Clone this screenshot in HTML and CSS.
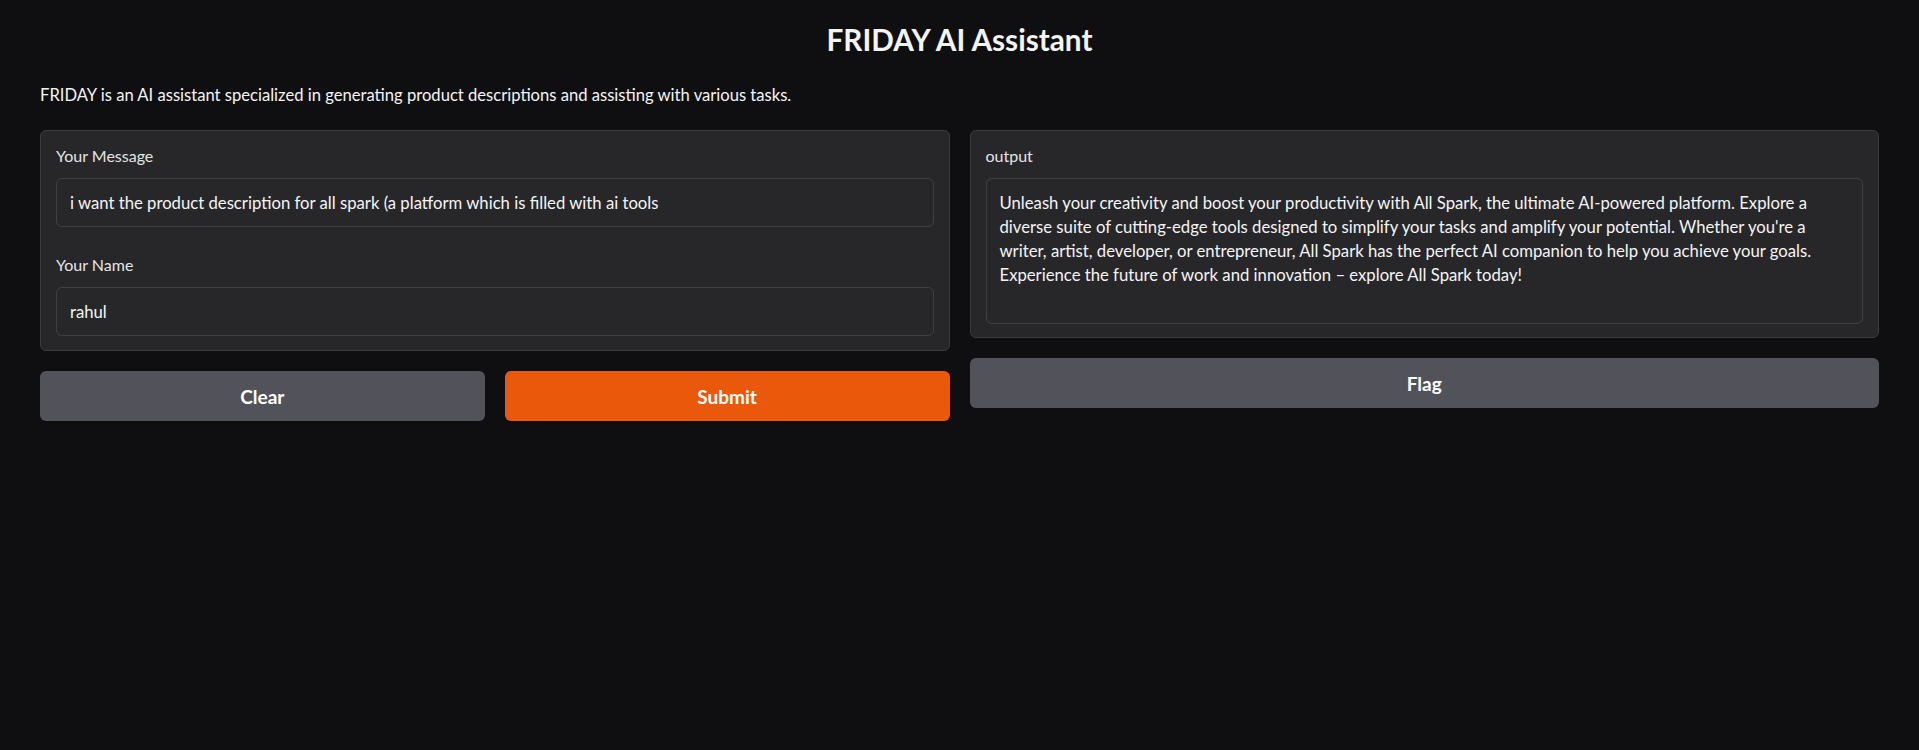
FILE: index.html
```html
<!DOCTYPE html>
<html lang="en">
<head>
<meta charset="utf-8">
<title>FRIDAY AI Assistant</title>
<link rel="stylesheet" href="styles.css">
</head>
<body>
<main class="app">
  <h1 class="title">FRIDAY AI Assistant</h1>
  <p class="desc">FRIDAY is an AI assistant specialized in generating product descriptions and assisting with various tasks.</p>
  <div class="columns">
    <section class="col">
      <div class="panel panel-inputs">
        <div class="field">
          <div class="label">Your Message</div>
          <div class="input">i want the product description for all spark (a platform which is filled with ai tools</div>
        </div>
        <div class="field">
          <div class="label">Your Name</div>
          <div class="input">rahul</div>
        </div>
      </div>
      <div class="btn-row">
        <button class="btn btn-secondary">Clear</button>
        <button class="btn btn-primary">Submit</button>
      </div>
    </section>
    <section class="col">
      <div class="panel panel-output">
        <div class="field">
          <div class="label">output</div>
          <div class="textarea">Unleash your creativity and boost your productivity with All Spark, the ultimate AI-powered platform. Explore a<br>diverse suite of cutting-edge tools designed to simplify your tasks and amplify your potential. Whether you're a<br>writer, artist, developer, or entrepreneur, All Spark has the perfect AI companion to help you achieve your goals.<br>Experience the future of work and innovation – explore All Spark today!</div>
        </div>
      </div>
      <div class="btn-row">
        <button class="btn btn-secondary btn-full">Flag</button>
      </div>
    </section>
  </div>
</main>
</body>
</html>
```
FILE: styles.css
```css
* { box-sizing: border-box; }
html, body {
  margin: 0;
  padding: 0;
  background: #0f0f11;
  color: #f4f4f5;
  font-family: "Lato", "Liberation Sans", sans-serif;
  height: 100%;
}
.app {
  padding: 0 40px;
}
.title {
  margin: 0;
  padding-top: 20px;
  line-height: 40px;
  font-size: 29.7px;
  font-weight: 700;
  text-align: center;
  color: #f4f4f5;
}
.desc {
  margin: 23px 0 0;
  font-size: 16.6px;
  line-height: 24px;
  color: #f4f4f5;
}
.columns {
  margin-top: 23px;
  display: grid;
  grid-template-columns: 1fr 1fr;
  gap: 20px;
  align-items: start;
}
.col {
  display: flex;
  flex-direction: column;
  gap: 20px;
}
.panel {
  background: #27272a;
  border: 1px solid #3b3b40;
  border-radius: 6px;
  padding: 14px 15px 13px;
  display: flex;
  flex-direction: column;
  gap: 27px;
}
.panel-inputs {
  padding-bottom: 14px;
}
.label {
  font-size: 16px;
  line-height: 22px;
  color: #e4e4e7;
  margin-bottom: 11px;
}
.input {
  height: 49px;
  border: 1px solid #3f3f46;
  border-radius: 6px;
  background: #27272a;
  padding: 0 13px;
  display: flex;
  align-items: center;
  font-size: 16.7px;
  color: #f4f4f5;
  white-space: nowrap;
  overflow: hidden;
}
.textarea {
  height: 146px;
  border: 1px solid #3f3f46;
  border-radius: 6px;
  background: #27272a;
  padding: 12px 13px;
  font-size: 16.7px;
  line-height: 24px;
  color: #f4f4f5;
  white-space: nowrap;
  overflow: hidden;
}
.btn-row {
  display: flex;
  gap: 20px;
}
.btn {
  flex: 1;
  height: 50px;
  border: none;
  border-radius: 6px;
  font-family: inherit;
  font-size: 19px;
  font-weight: 700;
  color: #ffffff;
  cursor: pointer;
}
.btn-secondary {
  background: #52525b;
}
.btn-primary {
  background: #ea580c;
}
```
